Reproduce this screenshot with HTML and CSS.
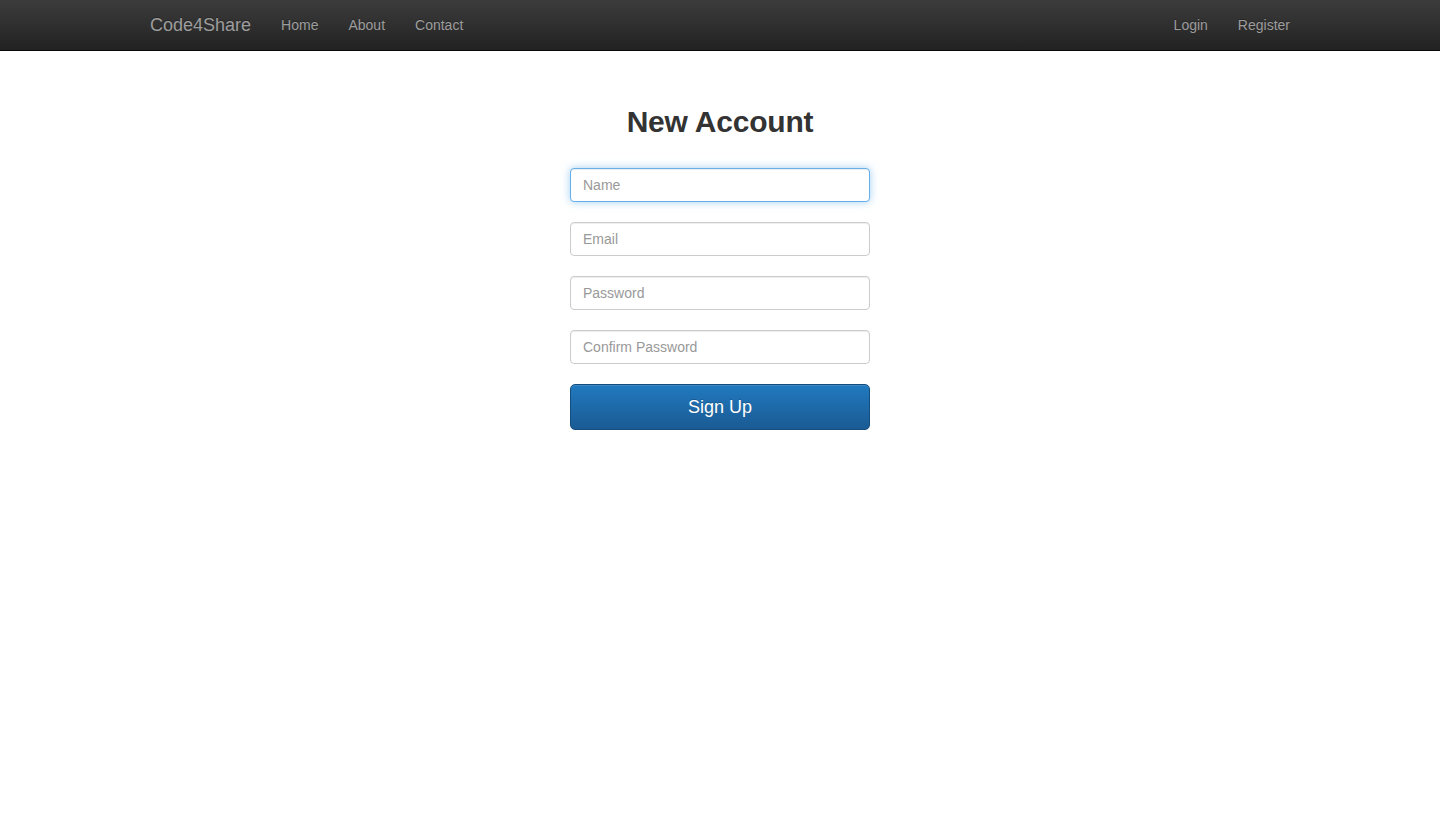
FILE: index.html
```html
<!DOCTYPE html>
<html>
<head>
<meta charset="utf-8">
<title>Code4Share</title>
<link rel="stylesheet" href="styles.css">
</head>
<body>
<nav class="navbar">
  <div class="container nav-inner">
    <div class="nav-left">
      <a class="brand" href="#">Code4Share</a>
      <a class="nav-link" href="#">Home</a>
      <a class="nav-link" href="#">About</a>
      <a class="nav-link" href="#">Contact</a>
    </div>
    <div class="nav-right">
      <a class="nav-link" href="#">Login</a>
      <a class="nav-link" href="#">Register</a>
    </div>
  </div>
</nav>
<main class="main">
  <form class="signup">
    <h2 class="title">New Account</h2>
    <input class="field focused" type="text" placeholder="Name">
    <input class="field" type="email" placeholder="Email">
    <input class="field" type="password" placeholder="Password">
    <input class="field" type="password" placeholder="Confirm Password">
    <button class="btn" type="button">Sign Up</button>
  </form>
</main>
</body>
</html>
```
FILE: styles.css
```css
* { box-sizing: border-box; }
html, body { margin: 0; padding: 0; }
body {
  font-family: "Liberation Sans", Arial, sans-serif;
  font-size: 14px;
  line-height: 1.42857;
  color: #333;
  background: #fff;
}
.navbar {
  height: 51px;
  background: linear-gradient(to bottom, #3c3c3c 0%, #222 100%);
  border-bottom: 1px solid #080808;
}
.container {
  width: 1170px;
  margin: 0 auto;
  padding: 0 15px;
}
.nav-inner {
  display: flex;
  justify-content: space-between;
  height: 50px;
}
.nav-left, .nav-right {
  display: flex;
  align-items: center;
  height: 50px;
}
.nav-right { margin-right: -15px; }
.brand {
  font-size: 18px;
  line-height: 20px;
  color: #9d9d9d;
  text-decoration: none;
  padding: 15px 15px 15px 0;
  text-shadow: 0 -1px 0 rgba(0,0,0,.25);
}
.nav-link {
  font-size: 14px;
  line-height: 20px;
  color: #9d9d9d;
  text-decoration: none;
  padding: 15px;
  text-shadow: 0 -1px 0 rgba(0,0,0,.25);
}
.main {
  display: flex;
  justify-content: center;
}
.signup {
  width: 300px;
  display: flex;
  flex-direction: column;
  margin-top: 54px;
}
.title {
  font-size: 30px;
  font-weight: bold;
  line-height: 33px;
  text-align: center;
  margin: 0 0 30px;
  color: #333;
  letter-spacing: -0.2px;
}
.field {
  display: block;
  width: 100%;
  height: 34px;
  padding: 6px 12px;
  font-family: inherit;
  font-size: 14px;
  line-height: 20px;
  color: #555;
  background: #fff;
  border: 1px solid #ccc;
  border-radius: 4px;
  box-shadow: inset 0 1px 1px rgba(0,0,0,.075);
  margin: 0 0 20px;
  outline: none;
}
.field::placeholder { color: #999; }
.field.focused {
  border-color: #66afe9;
  box-shadow: inset 0 1px 1px rgba(0,0,0,.075), 0 0 8px rgba(102,175,233,.6);
}
.btn {
  display: block;
  width: 100%;
  height: 46px;
  padding: 10px 16px;
  font-family: inherit;
  font-size: 18px;
  line-height: 24px;
  color: #fff;
  background: linear-gradient(to bottom, #2179bf 0%, #1a5b94 100%);
  border: 1px solid #154d7e;
  border-radius: 5px;
  text-shadow: 0 -1px 0 rgba(0,0,0,.2);
  box-shadow: inset 0 1px 0 rgba(255,255,255,.12), 0 1px 1px rgba(0,0,0,.075);
  cursor: pointer;
}
```
